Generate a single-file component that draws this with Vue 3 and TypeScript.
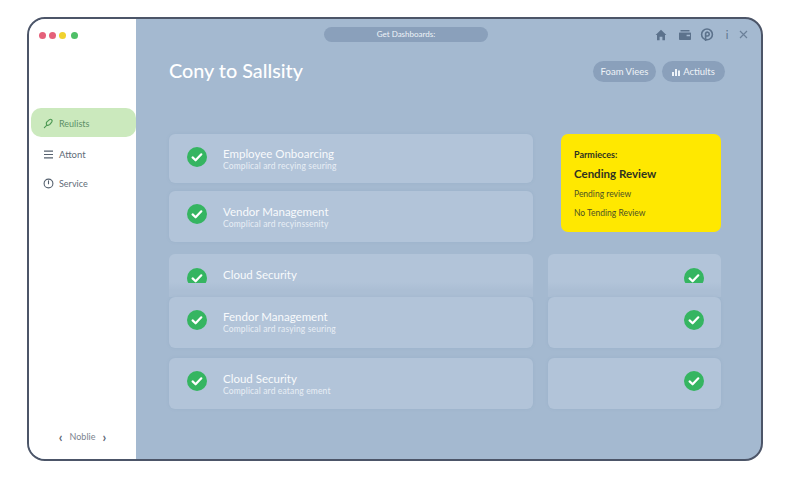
<script setup lang="ts">
interface Row {
  title: string
  sub: string
  kind: string
}
const topRows: Row[] = [
  { title: 'Employee Onboarcing', sub: 'Complical ard recying seuring', kind: 'r1' },
  { title: 'Vendor Management', sub: 'Complical ard recyinssenity', kind: 'r2' },
]
const lowerRows: Row[] = [
  { title: 'Fendor Management', sub: 'Complical ard rasying seuring', kind: 'r4' },
  { title: 'Cloud Security', sub: 'Complical ard eatang ement', kind: 'r5' },
]
</script>

<template>
  <div class="page">
    <div class="window">
      <aside class="sidebar">
        <div class="dots">
          <span class="dot red"></span><span class="dot red"></span><span class="dot yellow"></span><span class="dot green"></span>
        </div>
        <nav class="nav">
          <div class="item active">
            <svg width="11" height="11" viewBox="0 0 12 12" fill="none" stroke="#4f9a55" stroke-width="1.3" stroke-linecap="round" stroke-linejoin="round">
              <path d="M1.5 10.5 4 8M4 4.5 7 1.8c.8-.6 1.7-.5 2.4.1.7.7.8 1.7.1 2.5L7.5 7c-.9.9-2 1.2-3 .9-.9-.3-1.1-2.4-.5-3.4Z" />
            </svg>
            <span>Reulists</span>
          </div>
          <div class="item attont">
            <svg width="11" height="9" viewBox="0 0 11 9" fill="none" stroke="#55606e" stroke-width="1.2">
              <path d="M1 1.2h9M1 4.5h9M1 7.8h9" />
            </svg>
            <span>Attont</span>
          </div>
          <div class="item service">
            <svg width="11" height="11" viewBox="0 0 11 11" fill="none" stroke="#55606e" stroke-width="1.1" stroke-linecap="round">
              <circle cx="5.5" cy="5.5" r="4.4" />
              <path d="M5.5 2.8v3" />
            </svg>
            <span>Service</span>
          </div>
        </nav>
        <div class="pager">
          <span class="chev">‹</span><span>Noblie</span><span class="chev">›</span>
        </div>
      </aside>

      <main class="main">
        <div class="topbar">
          <div class="pill">Get Dashboards:</div>
          <div class="tools">
            <svg width="12" height="12" viewBox="0 0 12 12" fill="#5c728c"><path d="M6 .8 11.4 6H10v5.2H7.4V7.8H4.6v3.4H2V6H.6Z" /></svg>
            <svg width="12" height="10" viewBox="0 0 12 10" fill="#5c728c"><path d="M1.5 0h9v1.5h-9ZM.6 2.4h10.8c.3 0 .6.3.6.6v6c0 .4-.3 1-1 1H1c-.6 0-1-.5-1-1V3c0-.3.3-.6.6-.6Zm7 2.3v1.6H11V4.7Z" fill-rule="evenodd" /></svg>
            <svg width="14" height="14" viewBox="0 0 14 14" fill="none" stroke="#5c728c" stroke-width="1.6"><circle cx="7" cy="6.4" r="5.4" /><path d="M5.6 13V5.4A1.9 1.9 0 1 1 7.4 8H5.6" /></svg>
            <span class="info">i</span>
            <svg width="9" height="9" viewBox="0 0 9 9" fill="none" stroke="#6b8099" stroke-width="1.2"><path d="m1 1 7 7M8 1 1 8" /></svg>
          </div>
        </div>

        <header class="header">
          <h1>Cony to Sallsity</h1>
          <div class="buttons">
            <button class="btn">Foam Viees</button>
            <button class="btn">
              <svg width="8" height="8" viewBox="0 0 8 8" fill="#eef3f8"><path d="M0 4h2v4H0ZM3 1h2v7H3ZM6 2.5h2V8H6Z" /></svg>
              Actiults
            </button>
          </div>
        </header>

        <section class="content">
          <div class="upper">
            <div class="stack">
              <div v-for="row in topRows" :key="row.title" class="card row" :class="row.kind">
                <svg class="check" viewBox="0 0 20 20"><circle cx="10" cy="10" r="10" fill="#35b561" /><path d="m5.6 10.4 3 2.9 5.7-6" fill="none" stroke="#fff" stroke-width="2.2" stroke-linecap="round" stroke-linejoin="round" /></svg>
                <div class="text">
                  <div class="title">{{ row.title }}</div>
                  <div class="sub">{{ row.sub }}</div>
                </div>
              </div>
            </div>
            <div class="notice">
              <div class="n-head">Parmieces:</div>
              <div class="n-title">Cending Review</div>
              <div class="n-line first">Pending review</div>
              <div class="n-line">No Tending Review</div>
            </div>
          </div>

          <div class="line cut">
            <div class="card row faded">
              <div class="clip"><svg class="check" viewBox="0 0 20 20"><circle cx="10" cy="10" r="10" fill="#35b561" /><path d="m5.6 10.4 3 2.9 5.7-6" fill="none" stroke="#fff" stroke-width="2.2" stroke-linecap="round" stroke-linejoin="round" /></svg></div>
              <div class="text solo"><div class="title">Cloud Security</div></div>
            </div>
            <div class="card side faded">
              <div class="clip"><svg class="check" viewBox="0 0 20 20"><circle cx="10" cy="10" r="10" fill="#35b561" /><path d="m5.6 10.4 3 2.9 5.7-6" fill="none" stroke="#fff" stroke-width="2.2" stroke-linecap="round" stroke-linejoin="round" /></svg></div>
            </div>
          </div>

          <div v-for="row in lowerRows" :key="row.title" class="line" :class="row.kind">
            <div class="card row">
              <svg class="check" viewBox="0 0 20 20"><circle cx="10" cy="10" r="10" fill="#35b561" /><path d="m5.6 10.4 3 2.9 5.7-6" fill="none" stroke="#fff" stroke-width="2.2" stroke-linecap="round" stroke-linejoin="round" /></svg>
              <div class="text">
                <div class="title">{{ row.title }}</div>
                <div class="sub">{{ row.sub }}</div>
              </div>
            </div>
            <div class="card side">
              <svg class="check" viewBox="0 0 20 20"><circle cx="10" cy="10" r="10" fill="#35b561" /><path d="m5.6 10.4 3 2.9 5.7-6" fill="none" stroke="#fff" stroke-width="2.2" stroke-linecap="round" stroke-linejoin="round" /></svg>
            </div>
          </div>
        </section>
      </main>
    </div>
  </div>
</template>

<style>
html, body { margin: 0; background: #fff; }
</style>

<style scoped>
.page {
  width: 800px;
  height: 480px;
  box-sizing: border-box;
  padding: 17px 37px 19px 27px;
  background: #fff;
  font-family: Lato, "Open Sans", sans-serif;
  overflow: hidden;
}
.window {
  height: 100%;
  box-sizing: border-box;
  display: flex;
  border: 2px solid #4c5568;
  border-radius: 18px;
  overflow: hidden;
  background: #a4b9d0;
}
.sidebar {
  width: 107px;
  flex: none;
  background: #fff;
  display: flex;
  flex-direction: column;
  padding: 12px 0 17px 2px;
  box-sizing: border-box;
}
.dots { display: flex; align-items: center; padding-left: 8px; height: 8px; }
.dot { width: 7px; height: 7px; border-radius: 50%; margin-right: 3px; }
.dot.red { background: #e5617a; }
.dot.yellow { background: #f0d22e; margin-right: 5px; }
.dot.green { background: #4fbf67; }
.nav { margin-top: 69px; display: flex; flex-direction: column; }
.item {
  display: flex;
  align-items: center;
  gap: 5px;
  padding-left: 12px;
  font-size: 9px;
  color: #626c78;
}
.item.active {
  height: 29px;
  padding-top: 1px;
  box-sizing: border-box;
  background: #cbe9bd;
  border-radius: 10px;
  color: #5d9068;
}
.item.attont { margin-top: 4px; height: 26px; font-size: 9.5px; }
.item.service { margin-top: 3px; height: 26px; }
.pager {
  margin-top: auto;
  display: flex;
  justify-content: center;
  gap: 7px;
  font-size: 9px;
  color: #7a838e;
  padding-right: 2px;
  align-items: center;
}
.chev { font-size: 13px; line-height: 10px; color: #59636f; font-weight: 700; }
.main { flex: 1; min-width: 0; padding: 8px 36px 0 33px; box-sizing: border-box; }
.topbar { display: flex; align-items: center; height: 15px; padding-left: 155px; }
.pill {
  width: 164px;
  height: 15px;
  border-radius: 8px;
  background: #8aa0bb;
  color: #eef3f8;
  font-size: 8px;
  line-height: 15px;
  text-align: center;
}
.tools { margin-left: auto; margin-right: -23px; display: flex; align-items: center; }
.tools > * { flex: none; }
.tools svg:nth-child(2) { margin-left: 12px; }
.tools svg:nth-child(3) { margin-left: 9px; }
.info { width: 6px; margin-left: 10px; text-align: center; color: #5c728c; font-size: 11px; line-height: 12px; }
.tools svg:nth-child(5) { margin-left: 9px; }
.header {
  margin-top: 19px;
  height: 21px;
  display: flex;
  align-items: center;
  justify-content: space-between;
}
h1 { margin: 0 0 2px; font-size: 19.8px; font-weight: 500; color: #fff; line-height: 21px; }
.buttons { display: flex; gap: 6px; }
.btn {
  width: 63px;
  height: 21px;
  padding: 0;
  border: 0;
  border-radius: 11px;
  background: #8aa0bb;
  color: #eef3f8;
  font: inherit;
  font-size: 9.5px;
  display: flex;
  align-items: center;
  justify-content: center;
  gap: 3px;
}
.content { margin-top: 52px; width: 552px; }
.upper { display: flex; justify-content: space-between; align-items: flex-start; }
.stack { width: 364px; display: flex; flex-direction: column; gap: 8px; }
.card {
  background: #b2c4d9;
  border-radius: 6px;
  box-sizing: border-box;
  box-shadow: 0 0 3px rgba(130, 155, 185, .25);
}
.row { display: flex; align-items: center; padding-left: 18px; }
.r1 { height: 49px; }
.r2 { height: 51px; }
.check { width: 20px; height: 20px; flex: none; display: block; }
.row > .check, .side > .check { margin-bottom: 6px; }
.r1 > .check { margin-bottom: 4px; }
.text { margin-left: 16px; margin-top: 1px; color: #fff; }
.r1 > .text { margin-top: 2px; }
.r4 .text { margin-top: 0; }
.title { font-size: 11.5px; line-height: 14px; color: #f8fafc; }
.sub { font-size: 8.5px; line-height: 11px; color: #e8eef5; letter-spacing: .15px; }
.notice {
  width: 160px;
  height: 98px;
  box-sizing: border-box;
  background: #ffe800;
  border-radius: 7px;
  padding: 14px 13px 0;
  color: #2f3320;
}
.n-head { font-size: 9px; line-height: 14px; font-weight: 700; }
.n-title { font-size: 11.5px; line-height: 18px; font-weight: 700; margin-top: 3px; }
.n-line { font-size: 8.5px; line-height: 12px; margin-top: 7px; color: #4c5025; }
.n-line.first { margin-top: 5px; }
.line {
  display: grid;
  grid-template-columns: 364px 173px;
  column-gap: 15px;
}
.cut { margin-top: 12px; height: 43px; }
.r4 { height: 51px; }
.r5 { height: 51px; margin-top: 10px; }
.side { display: flex; justify-content: flex-end; align-items: center; padding-right: 17px; }
.faded {
  align-items: flex-start;
  background: linear-gradient(#b2c4d9 0, #b2c4d9 28px, #abbed4 36px, #abbed4 100%);
  border-radius: 6px 6px 0 0;
  box-shadow: none;
  padding-top: 14px;
}
.clip { width: 20px; height: 15px; overflow: hidden; flex: none; }
.solo { margin-top: 0; }
</style>
